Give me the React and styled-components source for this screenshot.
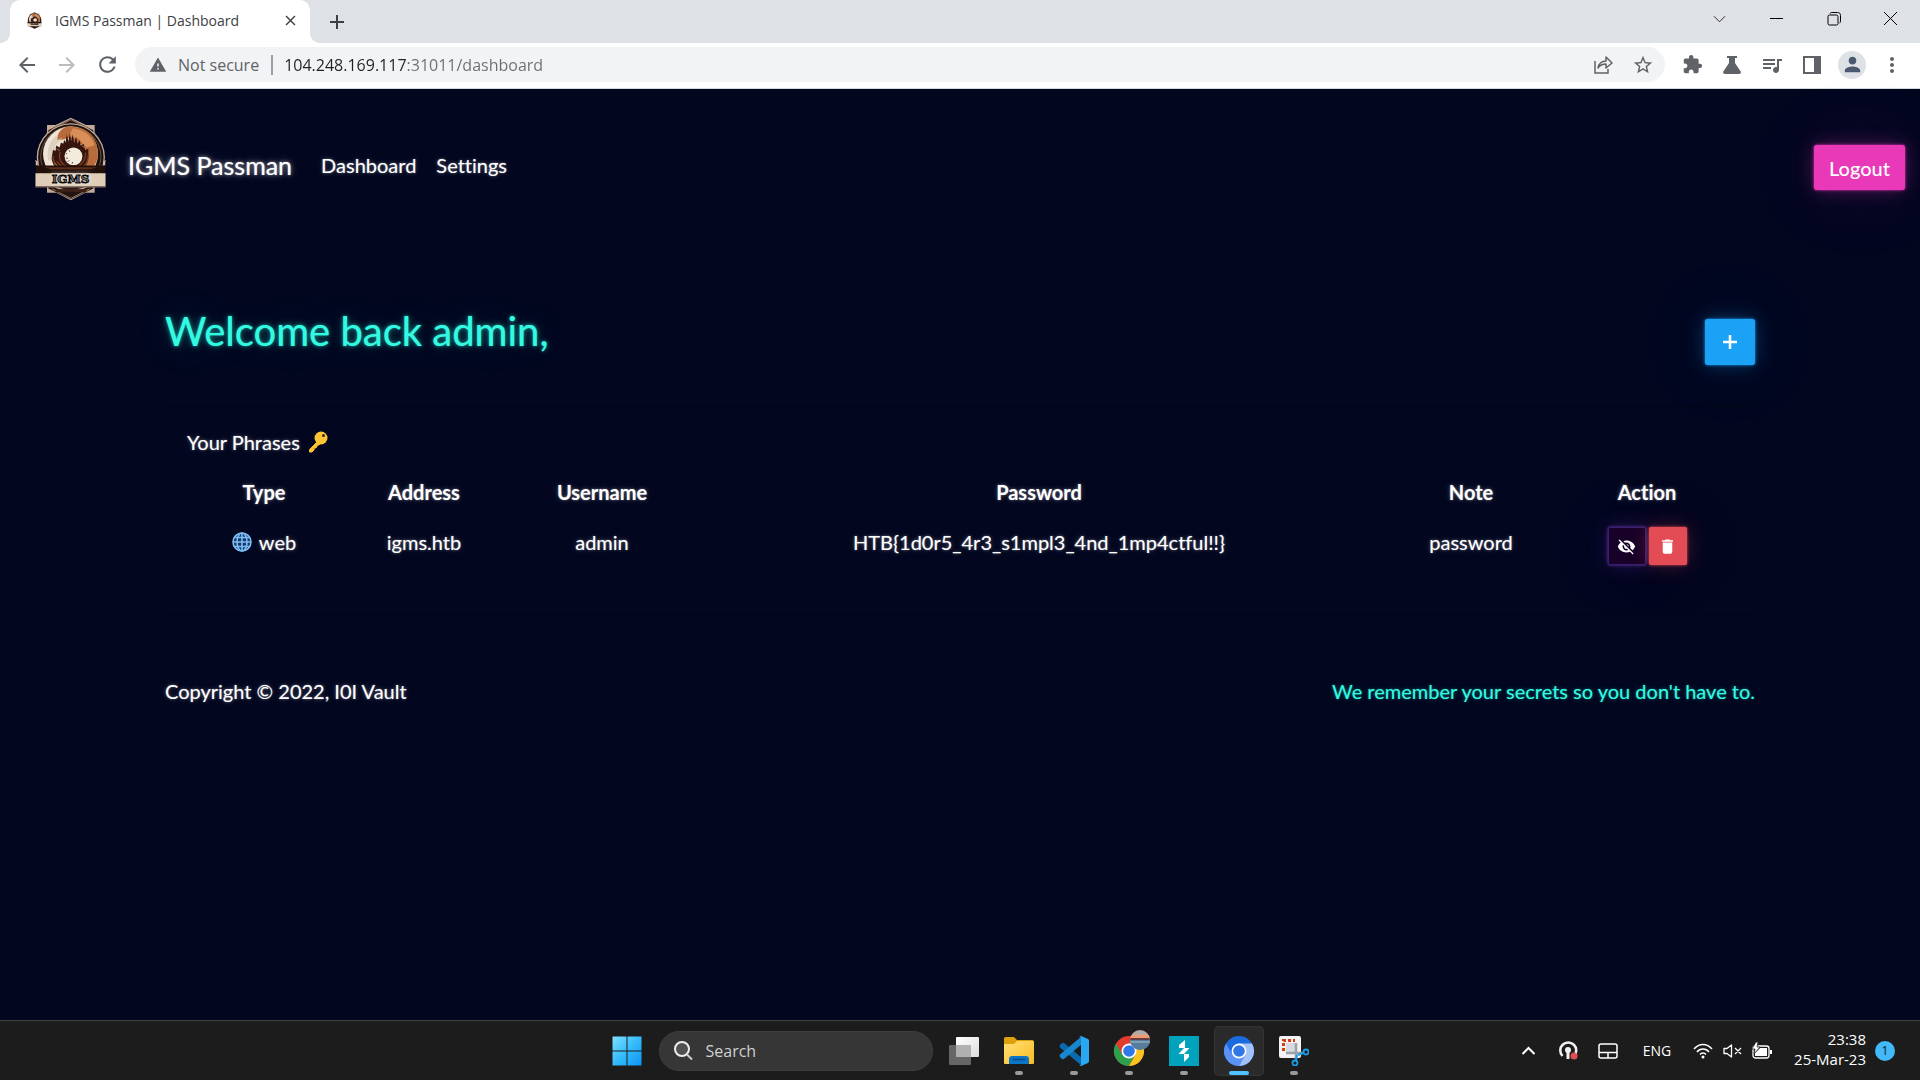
import React, { useState } from 'react';
import styled, { createGlobalStyle, css } from 'styled-components';
import {
  MdAdd,
  MdArrowBack,
  MdArrowForward,
  MdClose,
  MdDelete,
  MdExtension,
  MdMoreVert,
  MdPerson,
  MdQueueMusic,
  MdRefresh,
  MdStarBorder,
  MdVisibilityOff,
  MdWarning,
} from 'react-icons/md';

const pageFont = 'Lato, "Liberation Sans", sans-serif';
const systemFont = '"Open Sans", "Noto Sans", sans-serif';

const boxGlow = rgb => css`
  box-shadow: 0 0 2px rgba(${rgb}, 0.9), 0 0 4px rgba(${rgb}, 0.4),
    0 0 20px rgba(${rgb}, 0.3), 0 0 80px rgba(${rgb}, 0.1);
`;

const textGlow = css`
  text-shadow: 0 0 1px rgba(255, 255, 255, 0.3), 0 0 3px rgba(255, 255, 255, 0.3),
    0 0 6px rgba(255, 255, 255, 0.2);
`;

const GlobalStyle = createGlobalStyle`
  * {
    box-sizing: border-box;
  }

  body {
    margin: 0;
    background: #02061f;
  }

  button,
  input {
    margin: 0;
    padding: 0;
    border: 0;
    background: none;
    font: inherit;
    color: inherit;
  }

  svg {
    display: block;
    flex: none;
  }
`;

const Screen = styled.div`
  display: flex;
  flex-direction: column;
  min-height: 100vh;
`;

/* browser window */

const TabStrip = styled.div`
  display: flex;
  align-items: stretch;
  height: 43px;
  padding-left: 10px;
  background: #dee1e6;
  font-family: ${systemFont};
`;

const Tab = styled.div`
  position: relative;
  display: flex;
  align-items: center;
  gap: 13px;
  width: 300px;
  padding: 0 11px 3px 17px;
  border-radius: 10px 10px 0 0;
  background: #fff;
  color: #3c4043;
  font-size: 14px;

  &::before,
  &::after {
    content: '';
    position: absolute;
    bottom: 0;
    width: 10px;
    height: 10px;
  }

  &::before {
    right: 100%;
    background: radial-gradient(circle at 0 0, transparent 10px, #fff 10px);
  }

  &::after {
    left: 100%;
    background: radial-gradient(circle at 100% 0, transparent 10px, #fff 10px);
  }
`;

const TabTitle = styled.span`
  flex: 1;
  white-space: nowrap;
`;

const StripButton = styled.button`
  display: grid;
  place-items: center;
  width: ${props => props.$width}px;
  color: ${props => props.$color || '#3c4043'};
`;

const WindowControls = styled.div`
  display: flex;
  margin-left: auto;
  padding: 0 1px 6px 0;
`;

const Toolbar = styled.div`
  display: flex;
  align-items: center;
  height: 46px;
  padding: 0 8px 2px 7px;
  border-bottom: 1px solid #d5d7db;
  background: #fff;
  color: #5f6368;
  font-family: ${systemFont};
`;

const ToolButton = styled.button`
  display: grid;
  place-items: center;
  width: 40px;
  height: 35px;
  color: ${props => (props.$muted ? '#babcbe' : '#5f6368')};
`;

const AddressBar = styled.div`
  flex: 1;
  display: flex;
  align-items: center;
  height: 35px;
  margin: 0 7px 0 8px;
  padding: 0 2px 0 14px;
  border-radius: 18px;
  background: #f1f3f4;
  font-size: 16px;
`;

const Security = styled.span`
  margin: 0 12px 0 11px;
  white-space: nowrap;
`;

const Divider = styled.span`
  width: 2px;
  height: 20px;
  margin-right: 11px;
  background: #9aa0a6;
`;

/* the host is darker than the port and the path */
const UrlInput = styled.input`
  flex: 1;
  height: 30px;
  outline: 0;
  background: linear-gradient(to right, #202124 122px, #6a6e73 122px);
  background-clip: text;
  color: transparent;
  caret-color: #202124;
`;

const Avatar = styled.span`
  display: grid;
  place-items: center;
  width: 28px;
  height: 28px;
  border-radius: 50%;
  background: #dee1e6;
  color: #4b5970;
`;

/* passman page */

const Page = styled.div`
  flex: 1;
  background: #02061f;
  color: #fff;
  font-family: ${pageFont};
  font-size: 20px;
  font-variant-ligatures: none;
  line-height: 30px;
  ${textGlow}
`;

const Header = styled.header`
  display: flex;
  align-items: center;
  padding: 28px 15px 28px 35px;
`;

const Brand = styled.a`
  display: flex;
  align-items: center;
  gap: 22px;
  margin-right: 29px;
  color: #fff;
  font-size: 25px;
  text-decoration: none;
  text-shadow: 0 0 1px rgba(255, 255, 255, 0.6), 0 0 4px rgba(255, 255, 255, 0.5),
    0 0 10px rgba(255, 255, 255, 0.3), 0 0 40px rgba(255, 255, 255, 0.2);

  svg {
    margin-bottom: 12px;
  }
`;

const Nav = styled.nav`
  display: flex;
  gap: 20px;
  margin-right: auto;
`;

const NavLink = styled.a`
  color: #fff;
  text-decoration: none;
`;

const LogoutButton = styled.button`
  height: 45px;
  margin-top: 4px;
  padding: 2px 15px 0;
  border-radius: 3px;
  background: #ea39b8;
  font-weight: 500;
  ${boxGlow('234, 57, 184')}
`;

const Container = styled.main`
  padding: 67px 165px 0;
`;

const Intro = styled.div`
  display: flex;
  align-items: center;
  justify-content: space-between;
  margin-bottom: 30px;
`;

const Welcome = styled.h1`
  margin: 0;
  padding-bottom: 22px;
  color: #32fbe2;
  font-size: 40px;
  font-weight: 400;
  line-height: 46px;
  text-shadow: 0 0 1px rgba(50, 251, 226, 0.6), 0 0 4px rgba(50, 251, 226, 0.5),
    0 0 10px rgba(50, 251, 226, 0.3), 0 0 40px rgba(50, 251, 226, 0.2);
`;

const AddButton = styled.button`
  display: grid;
  place-items: center;
  width: 50px;
  height: 46px;
  border-radius: 3px;
  background: #1ba2f6;
  ${boxGlow('27, 162, 246')}
`;

const Card = styled.section`
  padding: 20px 21px 39px;
  border: 1px solid #020415;
  border-radius: 2px;
`;

const CardTitle = styled.h2`
  display: flex;
  align-items: center;
  gap: 8px;
  margin: 0 0 10px;
  font-size: 20px;
  font-weight: 400;
`;

const Phrases = styled.table`
  width: 100%;
  border-collapse: collapse;
  table-layout: fixed;
  text-align: center;
`;

const HeadCell = styled.th`
  width: ${props => props.$width};
  padding: 10px 0;
  font-weight: 700;
`;

const Cell = styled.td`
  padding: 10px 0;
  vertical-align: top;
`;

const CellContent = styled.div`
  display: flex;
  align-items: center;
  justify-content: center;
  gap: ${props => props.$gap}px;
`;

const ActionButton = styled.button`
  display: grid;
  place-items: center;
  width: 38px;
  height: 38px;
  border-radius: 2px;

  ${props =>
    props.$danger
      ? css`
          background: #e44c55;
          ${boxGlow('228, 76, 85')}
        `
      : css`
          border: 1px solid #3a1f6e;
          background: #170229;
          ${boxGlow('111, 66, 193')}
        `}
`;

const Footer = styled.footer`
  display: flex;
  justify-content: space-between;
  padding-top: 61px;
`;

const Motto = styled.span`
  color: #32fbe2;
  text-shadow: 0 0 1px rgba(50, 251, 226, 0.3), 0 0 3px rgba(50, 251, 226, 0.3),
    0 0 6px rgba(50, 251, 226, 0.2);
`;

/* taskbar */

const Taskbar = styled.div`
  display: grid;
  grid-template-columns: 1fr auto 1fr;
  align-items: center;
  height: 60px;
  border-top: 1px solid #404043;
  background: #1c1c1c;
  color: #fff;
  font-family: ${systemFont};
`;

const Apps = styled.div`
  grid-column: 2;
  display: flex;
  align-items: center;
  gap: 5px;
`;

const AppButton = styled.button`
  position: relative;
  display: grid;
  place-items: center;
  width: 50px;
  height: 50px;
  border-radius: 5px;
  box-shadow: ${props => (props.$active ? 'inset 0 0 0 1px #343434' : 'none')};
  background: ${props => (props.$active ? '#2a2a2a' : 'transparent')};

  &::after {
    content: '';
    display: ${props => (props.$running ? 'block' : 'none')};
    position: absolute;
    bottom: 1px;
    left: 50%;
    width: ${props => (props.$active ? 20 : 8)}px;
    height: 4px;
    border-radius: 2px;
    background: ${props => (props.$active ? '#4cc2ff' : '#9a9a9a')};
    transform: translateX(-50%);
  }
`;

const SearchBox = styled.label`
  display: flex;
  align-items: center;
  gap: 13px;
  width: 274px;
  height: 40px;
  margin: 0 1px 0 2px;
  padding: 0 14px;
  border: 1px solid #3e3e3e;
  border-radius: 20px;
  background: #363636;

  input {
    width: 100%;
    outline: 0;
    font-size: 16px;
  }

  input::placeholder {
    color: #d0d0d0;
    opacity: 1;
  }
`;

const Tray = styled.div`
  display: flex;
  align-items: center;
  justify-content: flex-end;
  padding-right: 25px;
  font-size: 14px;
`;

const TrayButton = styled.button`
  display: flex;
  align-items: center;
  justify-content: center;
  gap: ${props => props.$gap || 0}px;
  width: ${props => props.$width}px;
  height: 40px;
`;

const Clock = styled.div`
  width: 88px;
  padding-bottom: 4px;
  font-size: 15px;
  line-height: 20px;
  text-align: right;
  white-space: nowrap;
`;

const Badge = styled.span`
  width: 20px;
  height: 20px;
  margin-left: 9px;
  border-radius: 50%;
  background: #42b9fb;
  color: #101820;
  font-size: 12px;
  line-height: 19px;
  text-align: center;
`;

/* drawings */

const Crest = ({ width, height }) => (
  <svg width={width} height={height} viewBox="44 36 214 254" aria-hidden="true">
    <path d="M80 60h26L152 38l46 22h26v90H80zM80 230h144v35h-28l-44 23-44-23H80z" fill="#c4ab98" />
    <path d="M84 76l68-34 68 34v40H84zM84 230h136v22l-68 33-68-33z" fill="#24150f" />
    <path d="M98 72l54-28 54 28M96 254l56 28 56-28" fill="none" stroke="#94786a" strokeWidth="3" />
    <circle cx="152" cy="158" r="103" fill="#c4ab98" />
    <circle cx="152" cy="158" r="99" fill="#1f110c" />
    <circle cx="152" cy="156" r="91" fill="none" stroke="#8c7061" strokeWidth="2" />
    <circle cx="151" cy="148" r="83" fill="#efe4d6" />
    <path d="M138 66c50-6 96 20 96 82 0 24-14 43-31 52l-26-18 8-62-40-20-32 8c-8-14 8-38 25-42z" fill="#b86c3b" />
    <path d="M158 70c34 4 58 24 66 52l-26 6-22-26-30-8z" fill="#d98f5a" />
    <path d="M84 168c-8-30 4-64 30-80l-6 20 18-9-24 27 12-4-17 20 6 24z" fill="#ded0be" />
    <path
      d="M94 160l4-24 8 2 2-16 10 6 4-15 7 4 3-12 4 8 4-25 5 22 4-26 4 24 5-20 4 25 6-17 4 20 7-10 3 16 9-4 4 18 10-4v22c0 30-18 50-52 50-36 0-58-18-59-44z"
      fill="#35160f"
    />
    <path
      d="M98 154c0 30 24 45 58 44 30-1 48-20 49-48M110 170c14 20 36 28 64 20M120 141c-6 20 0 36 22 46M196 144c4 20-8 32-22 42"
      fill="none"
      stroke="#7c3c1f"
      strokeWidth="4"
    />
    <path d="M101 175l14 10M186 124l12 6M109 132l10 6" fill="none" stroke="#b36b3e" strokeWidth="3" />
    <circle cx="160" cy="155" r="27" fill="#f4ebdf" />
    <path d="M136 145l4 3M138 160l5 1M143 171l4-4M147 137l2 4M156 177l1-5" stroke="#5b392a" strokeWidth="3" />
    <path d="M46 183v-10l-2-8 8 6v12zM256 183v-10l2-8-8 6v12z" fill="#d3bdaa" />
    <path d="M46 183h210v24H46z" fill="#211009" />
    <path d="M72 188h160l-20 6H90z" fill="#5c2c18" />
    <path d="M45 206h212v40H45z" fill="#dfcdb8" />
    <path d="M45 245h212v4H45z" fill="#80685a" />
    <path d="M106 254h92v9h-92z" fill="#3a1d14" />
    <text
      x="151"
      y="236"
      textAnchor="middle"
      fill="#0b0705"
      stroke="#0b0705"
      strokeWidth="3"
      fontFamily="DejaVu Serif, serif"
      fontWeight="700"
      fontSize="36"
    >
      IGMS
    </text>
  </svg>
);

const ChevronIcon = ({ up, width = 13, stroke = 1 }) => (
  <svg width={width} height="14" viewBox="0 0 14 14" fill="none" stroke="currentColor" strokeWidth={stroke}>
    <path d={up ? 'M1 10l6-6 6 6' : 'M1 4l6 6 6-6'} />
  </svg>
);

const ShareIcon = () => (
  <svg width="20" height="20" viewBox="0 0 20 20" fill="none" stroke="currentColor" strokeWidth="1.5">
    <path d="M2 6v12h13v-4" />
    <path d="M5 13c1-5 4-7 8-7V2l6 6-6 5V9c-4 0-6 1-8 4z" strokeLinejoin="round" />
  </svg>
);

const FlaskIcon = () => (
  <svg width="18" height="18" viewBox="0 0 18 18" fill="currentColor">
    <path d="M4 0h10v2h-2v5l6 9c0 1-1 2-2 2H2c-1 0-2-1-2-2l6-9V2H4z" />
  </svg>
);

const PanelIcon = () => (
  <svg width="18" height="18" viewBox="0 0 18 18" fill="currentColor" fillRule="evenodd">
    <path d="M0 0h18v18H0zM2 2v14h9V2z" />
  </svg>
);

const RestoreIcon = () => (
  <svg width="14" height="14" viewBox="0 0 14 14" fill="none" stroke="#000">
    <rect x="1" y="3" width="10" height="10" rx="1.5" />
    <path d="M3 1.5C3 1 4 .5 5 .5h5.500c2 0 3 1 3 3V9c0 1-.5 2-1 2" />
  </svg>
);

const CloseWindowIcon = () => (
  <svg width="13" height="13" viewBox="0 0 13 13" stroke="#000" strokeWidth="1">
    <path d="M0 0l13 13M13 0L0 13" />
  </svg>
);

const PlusIcon = () => (
  <svg width="14" height="14" viewBox="0 0 14 14" fill="currentColor">
    <path d="M6 0h2v6h6v2H8v6H6V8H0V6h6z" stroke="currentColor" strokeWidth=".5" />
  </svg>
);

const KeyIcon = () => (
  <svg width="20" height="22" viewBox="0 0 20 22">
    <path d="M9 11L1.500 18.500V21H4l2-2v-2h2l1-2 3-2z" fill="#fbc02d" stroke="#fbc02d" strokeLinejoin="round" />
    <circle cx="13" cy="7" r="6.500" fill="#fcc536" />
    <circle cx="15.500" cy="4.500" r="1.500" fill="#33291c" />
  </svg>
);

const GlobeIcon = () => (
  <svg width="20" height="20" viewBox="0 0 20 20" fill="none" stroke="#7cbcf5" strokeWidth="1.600">
    <circle cx="10" cy="10" r="9" fill="#173a66" />
    <ellipse cx="10" cy="10" rx="5" ry="9" />
    <path d="M10 1v18M1 10h18M3 5.500h14M3 14.500h14" />
  </svg>
);

const WindowsIcon = () => (
  <svg width="30" height="30" viewBox="0 0 30 30">
    <linearGradient id="win" x1="0" y1="0" x2="1" y2="1" gradientUnits="objectBoundingBox">
      <stop offset="0" stopColor="#80e0ff" />
      <stop offset=".5" stopColor="#35bcfb" />
      <stop offset="1" stopColor="#0a94f5" />
    </linearGradient>
    <path d="M.5.5h14v14H.5zM15.500.5h14v14h-14zM.5 15.500h14v14H.5zM15.500 15.500h14v14h-14z" fill="url(#win)" />
  </svg>
);

const SearchIcon = () => (
  <svg width="19" height="20" viewBox="0 0 19 20" fill="none">
    <circle cx="8" cy="8" r="7" fill="#515151" stroke="#eee" strokeWidth="2" />
    <path d="M13 13.500l5 5" stroke="#ccc" strokeWidth="2" />
  </svg>
);

const TaskViewIcon = () => (
  <svg width="30" height="28" viewBox="0 0 30 28">
    <linearGradient id="tv" x1="0" y1="0" x2="1" y2="1">
      <stop stopColor="#fff" />
      <stop offset="1" stopColor="#ddd" />
    </linearGradient>
    <rect y="8" width="22" height="20" rx="1" fill="#666" />
    <rect x="7" width="23" height="20" rx="1" fill="url(#tv)" />
    <path d="M7 8h15v12H7z" fill="#b0b0b0" />
  </svg>
);

const FolderIcon = () => (
  <svg width="30" height="27" viewBox="0 0 30 27">
    <linearGradient id="fold" x1="0" y1="0" x2="1" y2="1">
      <stop stopColor="#ffdf78" />
      <stop offset="1" stopColor="#fbbd1e" />
    </linearGradient>
    <path d="M0 1.500Q0 0 1.500 0H10l3 3h15q2 0 2 2v6H0z" fill="#dfa00c" />
    <path d="M0 7h10l3-3h16l1 1v21q0 1-1 1H1q-1 0-1-1z" fill="url(#fold)" />
    <path d="M5 27v-5q0-3 3-3h14q3 0 3 3v5z" fill="#0b76c8" />
    <path d="M8.500 22.500h13" stroke="#074a8a" strokeWidth="1.500" />
  </svg>
);

const CodeIcon = () => (
  <svg width="30" height="30" viewBox="0 0 30 30">
    <path d="M1 9l2-2q1-.5 2 0l18 15v8L1 11.500Q0 10 1 9z" fill="#0b69ad" />
    <path d="M1 21l2 2q1 .5 2 0L23 8V0L1 18.500Q0 20 1 21z" fill="#1787d0" />
    <path d="M22 0l7 3q1 .5 1 2v20q0 1.500-1 2l-7 3q-1 0-2-1 2 1 2-1V2q0-2-2-1 1-1 2-1z" fill="#2aa7f2" />
  </svg>
);

const BrowserIcon = ({ colors: [top, left, right], profile }) => (
  <svg width="46" height="46" viewBox="-8 -8 46 46">
    <circle cx="15" cy="15" r="15" fill={top} />
    <path d="M2 7.500A15 15 0 0 0 15 30l6.500-11.300L8.500 19z" fill={left} />
    <path d="M28 7.500A15 15 0 0 1 15 30l6.500-11.300L15 7.500z" fill={right} />
    <circle cx="15" cy="15" r="7.500" fill="#fff" />
    <circle cx="15" cy="15" r="5.800" fill="#3077e8" />
    {profile && (
      <g transform="translate(16 -6)">
        <clipPath id="face">
          <circle cx="10" cy="10" r="10" />
        </clipPath>
        <g clipPath="url(#face)">
          <path d="M0 0h20v20H0z" fill="#b6a9a6" />
          <path d="M0 5h20v5H0z" fill="#ee9b73" />
          <path d="M0 8h20v2H0z" fill="#663c47" />
          <path d="M0 10h20v10H0z" fill="#557b9d" />
          <path d="M0 11h20v2H0z" fill="#839db1" />
        </g>
      </g>
    )}
  </svg>
);

const BurpIcon = () => (
  <svg width="30" height="30" viewBox="0 0 30 30">
    <path d="M0 0h30v30H0z" fill="#00a3bb" />
    <path d="M16 4v8h4.500L15 18h5v3l-5 5v-8H9.500L15 12h-5V9z" fill="#fff" />
  </svg>
);

const SnipIcon = () => (
  <svg width="30" height="30" viewBox="0 0 30 30">
    <rect width="22" height="22" rx="2" fill="#f2f2f4" />
    <path d="M7 7h9v9H7z" fill="#d7dbe1" />
    <path d="M4.500 15V4.500H16" fill="none" stroke="#d33d10" strokeWidth="3" strokeDasharray="3 2" />
    <path d="M17 7v16M7 17h17" stroke="#9aa1a9" strokeWidth="2.500" />
    <circle cx="27" cy="16" r="2.500" fill="none" stroke="#1c9be6" strokeWidth="1.800" />
    <circle cx="16" cy="27" r="2.500" fill="none" stroke="#1c9be6" strokeWidth="1.800" />
    <path d="M19 19l5-2M18 19l-1 5" stroke="#1c9be6" strokeWidth="2" />
  </svg>
);

const PodcastIcon = () => (
  <svg width="20" height="20" viewBox="0 0 20 20" fill="none">
    <path d="M4.500 15A8 8 0 1 1 16 15" stroke="#f2f2f2" strokeWidth="2.500" />
    <circle cx="10" cy="9" r="3" fill="#f2f2f2" />
    <path d="M10 9v9" stroke="#f2f2f2" strokeWidth="3" />
    <circle cx="16" cy="15" r="3.500" fill="#dd4f54" />
  </svg>
);

const TouchpadIcon = () => (
  <svg width="20" height="16" viewBox="0 0 20 16" fill="none" stroke="#fff" strokeWidth="1.500">
    <rect x="1" y="1" width="18" height="14" rx="2" />
    <path d="M1 9.500h18M10 9.500V15" />
  </svg>
);

const WifiIcon = () => (
  <svg width="20" height="16" viewBox="0 0 20 16" fill="none" stroke="#fff" strokeWidth="1.500">
    <path d="M1 6C6 0 14 0 19 6M4 9c3-4 9-4 12 0M7 11.500c1.500-2 4.500-2 6 0" />
    <circle cx="10" cy="14" r="1.500" fill="#fff" stroke="none" />
  </svg>
);

const MutedIcon = () => (
  <svg width="19" height="14" viewBox="0 0 19 14" fill="none" stroke="#fff" strokeWidth="1.300">
    <path d="M1 4.500h3L8.500 1v12L4 9.500H1zM12 4l6 6M18 4l-6 6" strokeLinejoin="round" />
  </svg>
);

const BatteryIcon = () => (
  <svg width="20" height="17" viewBox="0 0 20 17">
    <rect x="1" y="4" width="16" height="12" rx="2.500" fill="none" stroke="#fff" strokeWidth="1.300" />
    <path d="M3 14V11l5-5h7v8zM18 8h2v4h-2z" fill="#fff" />
    <path d="M4 0L0 7h3l-1 5 6-7H5l1-5z" fill="#fff" stroke="#1c1c1c" strokeWidth=".7" />
  </svg>
);

// the password column takes what the others leave
const columns = [
  { title: 'Type', width: '154px' },
  { title: 'Address', width: '166px' },
  { title: 'Username', width: '190px' },
  { title: 'Password', width: 'auto' },
  { title: 'Note', width: '180px' },
  { title: 'Action', width: '172px' },
];

const phrases = [
  {
    type: 'web',
    address: 'igms.htb',
    username: 'admin',
    password: 'HTB{1d0r5_4r3_s1mpl3_4nd_1mp4ctful!!}',
    note: 'password',
  },
];

const BrowserFrame = () => {
  const [url, setUrl] = useState('104.248.169.117:31011/dashboard');

  return (
    <>
      <TabStrip>
        <Tab>
          <Crest width={15} height={17} />
          <TabTitle>IGMS Passman | Dashboard</TabTitle>
          <StripButton $width={18} aria-label="Close tab">
            <MdClose size={17} />
          </StripButton>
        </Tab>
        <StripButton $width={54} aria-label="New tab">
          <MdAdd size={24} />
        </StripButton>
        <WindowControls>
          <StripButton $width={57} $color="#202124" aria-label="Search tabs">
            <ChevronIcon />
          </StripButton>
          <StripButton $width={57} $color="#000" aria-label="Minimize">
            <svg width="13" height="1">
              <path d="M0 0h13v1H0z" />
            </svg>
          </StripButton>
          <StripButton $width={57} aria-label="Restore">
            <RestoreIcon />
          </StripButton>
          <StripButton $width={57} aria-label="Close">
            <CloseWindowIcon />
          </StripButton>
        </WindowControls>
      </TabStrip>
      <Toolbar>
        <ToolButton aria-label="Back">
          <MdArrowBack size={24} />
        </ToolButton>
        <ToolButton $muted aria-label="Forward">
          <MdArrowForward size={24} />
        </ToolButton>
        <ToolButton aria-label="Reload">
          <MdRefresh size={25} />
        </ToolButton>
        <AddressBar>
          <MdWarning size={18} />
          <Security>Not secure</Security>
          <Divider />
          <UrlInput aria-label="Address" value={url} spellCheck={false} onChange={e => setUrl(e.target.value)} />
          <ToolButton aria-label="Share">
            <ShareIcon />
          </ToolButton>
          <ToolButton aria-label="Bookmark">
            <MdStarBorder size={22} />
          </ToolButton>
        </AddressBar>
        <ToolButton aria-label="Extensions">
          <MdExtension size={21} />
        </ToolButton>
        <ToolButton aria-label="Labs">
          <FlaskIcon />
        </ToolButton>
        <ToolButton aria-label="Media">
          <MdQueueMusic size={24} />
        </ToolButton>
        <ToolButton aria-label="Side panel">
          <PanelIcon />
        </ToolButton>
        <ToolButton aria-label="Profile">
          <Avatar>
            <MdPerson size={23} />
          </Avatar>
        </ToolButton>
        <ToolButton aria-label="Menu">
          <MdMoreVert size={24} />
        </ToolButton>
      </Toolbar>
    </>
  );
};

const PhraseTable = () => (
  <Phrases>
    <thead>
      <tr>
        {columns.map(({ title, width }) => (
          <HeadCell key={title} $width={width}>
            {title}
          </HeadCell>
        ))}
      </tr>
    </thead>
    <tbody>
      {phrases.map(({ type, address, username, password, note }) => (
        <tr key={address}>
          <Cell>
            <CellContent $gap={7}>
              <GlobeIcon />
              {type}
            </CellContent>
          </Cell>
          <Cell>{address}</Cell>
          <Cell>{username}</Cell>
          <Cell>{password}</Cell>
          <Cell>{note}</Cell>
          <Cell>
            <CellContent $gap={3}>
              <ActionButton aria-label="Hide">
                <MdVisibilityOff size={19} />
              </ActionButton>
              <ActionButton $danger aria-label="Delete">
                <MdDelete size={19} />
              </ActionButton>
            </CellContent>
          </Cell>
        </tr>
      ))}
    </tbody>
  </Phrases>
);

const Dashboard = () => (
  <Page>
    <Header>
      <Brand href="#home">
        <Crest width={71} height={84} />
        IGMS Passman
      </Brand>
      <Nav>
        <NavLink href="#dashboard">Dashboard</NavLink>
        <NavLink href="#settings">Settings</NavLink>
      </Nav>
      <LogoutButton>Logout</LogoutButton>
    </Header>
    <Container>
      <Intro>
        <Welcome>Welcome back admin,</Welcome>
        <AddButton aria-label="Add phrase">
          <PlusIcon />
        </AddButton>
      </Intro>
      <Card>
        <CardTitle>
          Your Phrases
          <KeyIcon />
        </CardTitle>
        <PhraseTable />
      </Card>
      <Footer>
        <span>Copyright © 2022, I0I Vault</span>
        <Motto>We remember your secrets so you don't have to.</Motto>
      </Footer>
    </Container>
  </Page>
);

const SystemBar = () => (
  <Taskbar>
    <Apps>
      <AppButton aria-label="Start">
        <WindowsIcon />
      </AppButton>
      <SearchBox>
        <SearchIcon />
        <input aria-label="Search" placeholder="Search" />
      </SearchBox>
      <AppButton aria-label="Task view">
        <TaskViewIcon />
      </AppButton>
      <AppButton $running aria-label="File Explorer">
        <FolderIcon />
      </AppButton>
      <AppButton $running aria-label="Visual Studio Code">
        <CodeIcon />
      </AppButton>
      <AppButton $running aria-label="Chrome">
        <BrowserIcon colors={['#e33b2e', '#2da04b', '#fcc31e']} profile />
      </AppButton>
      <AppButton $running aria-label="Burp Suite">
        <BurpIcon />
      </AppButton>
      <AppButton $running $active aria-label="Chromium">
        <BrowserIcon colors={['#1b6be0', '#5b93f5', '#a3c2fa']} />
      </AppButton>
      <AppButton $running aria-label="Snipping Tool">
        <SnipIcon />
      </AppButton>
    </Apps>
    <Tray>
      <TrayButton $width={40} aria-label="Hidden icons">
        <ChevronIcon up width={15} stroke={2} />
      </TrayButton>
      <TrayButton $width={40} aria-label="Podcast">
        <PodcastIcon />
      </TrayButton>
      <TrayButton $width={40} aria-label="Touchpad">
        <TouchpadIcon />
      </TrayButton>
      <TrayButton $width={58}>ENG</TrayButton>
      <TrayButton $width={92} $gap={10} aria-label="Network, volume and battery">
        <WifiIcon />
        <MutedIcon />
        <BatteryIcon />
      </TrayButton>
      <Clock>
        23:38
        <br />
        25-Mar-23
      </Clock>
      <Badge>1</Badge>
    </Tray>
  </Taskbar>
);

export default () => (
  <Screen>
    <GlobalStyle />
    <BrowserFrame />
    <Dashboard />
    <SystemBar />
  </Screen>
);
